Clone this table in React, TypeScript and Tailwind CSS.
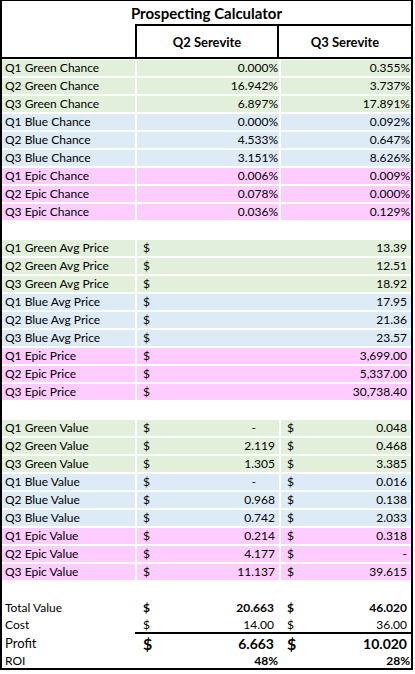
type Tone = "g" | "b" | "p";

const toneBg: Record<Tone, string> = {
  g: "bg-[#e2efda]",
  b: "bg-[#ddebf7]",
  p: "bg-[#ffccff]",
};

const chances: [string, string, string, Tone][] = [
  ["Q1 Green Chance", "0.000%", "0.355%", "g"],
  ["Q2 Green Chance", "16.942%", "3.737%", "g"],
  ["Q3 Green Chance", "6.897%", "17.891%", "g"],
  ["Q1 Blue Chance", "0.000%", "0.092%", "b"],
  ["Q2 Blue Chance", "4.533%", "0.647%", "b"],
  ["Q3 Blue Chance", "3.151%", "8.626%", "b"],
  ["Q1 Epic Chance", "0.006%", "0.009%", "p"],
  ["Q2 Epic Chance", "0.078%", "0.000%", "p"],
  ["Q3 Epic Chance", "0.036%", "0.129%", "p"],
];

const prices: [string, string, Tone][] = [
  ["Q1 Green Avg Price", "13.39", "g"],
  ["Q2 Green Avg Price", "12.51", "g"],
  ["Q3 Green Avg Price", "18.92", "g"],
  ["Q1 Blue Avg Price", "17.95", "b"],
  ["Q2 Blue Avg Price", "21.36", "b"],
  ["Q3 Blue Avg Price", "23.57", "b"],
  ["Q1 Epic Price", "3,699.00", "p"],
  ["Q2 Epic Price", "5,337.00", "p"],
  ["Q3 Epic Price", "30,738.40", "p"],
];

const values: [string, string, string, Tone][] = [
  ["Q1 Green Value", "-", "0.048", "g"],
  ["Q2 Green Value", "2.119", "0.468", "g"],
  ["Q3 Green Value", "1.305", "3.385", "g"],
  ["Q1 Blue Value", "-", "0.016", "b"],
  ["Q2 Blue Value", "0.968", "0.138", "b"],
  ["Q3 Blue Value", "0.742", "2.033", "b"],
  ["Q1 Epic Value", "0.214", "0.318", "p"],
  ["Q2 Epic Value", "4.177", "-", "p"],
  ["Q3 Epic Value", "11.137", "39.615", "p"],
];

const Blank = () => <div className="col-span-3 h-4" />;

export default function App() {
  return (
    <div className="bg-white w-[415px] h-[674px] font-['Lato',sans-serif] text-[12px] leading-4 text-black">
      <div className="w-[413px] border-x-2 border-t border-b-2 border-black">
        {/* title */}
        <div className="h-[23px] flex items-center justify-center text-[15px] font-bold">
          Prospecting Calculator
        </div>

        {/* column headers */}
        <div className="flex">
          <div className="w-[133px]" />
          <div className="flex flex-1 border-t-2 border-l-2 border-black text-[13px] font-bold">
            <div className="w-[142px] h-[31px] flex items-center justify-center border-r-2 border-black">
              Q2 Serevite
            </div>
            <div className="flex-1 h-[31px] flex items-center justify-center">Q3 Serevite</div>
          </div>
        </div>
        <div className="h-[2px] bg-black" />

        <div className="grid grid-cols-[133px_142px_130px] gap-x-[2px] gap-y-[2px] pt-[1px]">
          {chances.map(([label, a, b, t]) => (
            <div key={label} className="contents">
              <div className={`h-4 pl-[3px] ${toneBg[t]}`}>{label}</div>
              <div className={`h-4 pr-[1px] text-right ${toneBg[t]}`}>{a}</div>
              <div className={`h-4 pr-[1px] text-right ${toneBg[t]}`}>{b}</div>
            </div>
          ))}
          <Blank />
          {prices.map(([label, v, t]) => (
            <div key={label} className="contents">
              <div className={`h-4 pl-[3px] ${toneBg[t]}`}>{label}</div>
              <div className={`col-span-2 h-4 flex justify-between pl-[6px] pr-[4px] ${toneBg[t]}`}>
                <span>$</span>
                <span>{v}</span>
              </div>
            </div>
          ))}
          <Blank />
          {values.map(([label, a, b, t]) => (
            <div key={label} className="contents">
              <div className={`h-4 pl-[3px] ${toneBg[t]}`}>{label}</div>
              <div className={`h-4 flex justify-between pl-[6px] ${a === "-" ? "pr-[23px]" : "pr-[4px]"} ${toneBg[t]}`}>
                <span>$</span>
                <span>{a}</span>
              </div>
              <div className={`h-4 flex justify-between pl-[6px] pr-[4px] ${toneBg[t]}`}>
                <span>$</span>
                <span>{b}</span>
              </div>
            </div>
          ))}
          <Blank />
          <div className="h-4 pl-[3px]">Total Value</div>
          <div className="h-4 flex justify-between pl-[6px] pr-[5px] font-bold">
            <span>$</span>
            <span>20.663</span>
          </div>
          <div className="h-4 flex justify-between pl-[6px] pr-[4px] font-bold">
            <span>$</span>
            <span>46.020</span>
          </div>
        </div>

        {/* cost, profit, roi */}
        <div className="grid grid-cols-[133px_142px_130px] gap-x-[2px] mt-[2px] leading-[14px]">
          <div className="h-[14px] pl-[3px]">Cost</div>
          <div className="h-[14px] flex justify-between pl-[6px] pr-[5px]">
            <span>$</span>
            <span>14.00</span>
          </div>
          <div className="h-[14px] flex justify-between pl-[6px] pr-[4px]">
            <span>$</span>
            <span>36.00</span>
          </div>
        </div>
        <div className="flex">
          <div className="w-[133px]" />
          <div className="flex-1 h-[2px] bg-black" />
        </div>
        <div className="grid grid-cols-[133px_142px_130px] gap-x-[2px]">
          <div className="h-[19px] pl-[3px] leading-[19px] text-[13px]">Profit</div>
          <div className="h-[19px] flex justify-between items-center pl-[6px] pr-[5px] font-bold text-[14px] leading-[19px]">
            <span className="text-[16px]">$</span>
            <span>6.663</span>
          </div>
          <div className="h-[19px] flex justify-between items-center pl-[6px] pr-[4px] font-bold text-[14px] leading-[19px]">
            <span className="text-[16px]">$</span>
            <span>10.020</span>
          </div>
          <div className="h-[15px] pl-[3px] leading-[15px]">ROI</div>
          <div className="h-[15px] pr-[1px] text-right font-bold leading-[15px]">48%</div>
          <div className="h-[15px] pr-[1px] text-right font-bold leading-[15px]">28%</div>
        </div>
      </div>
    </div>
  );
}
